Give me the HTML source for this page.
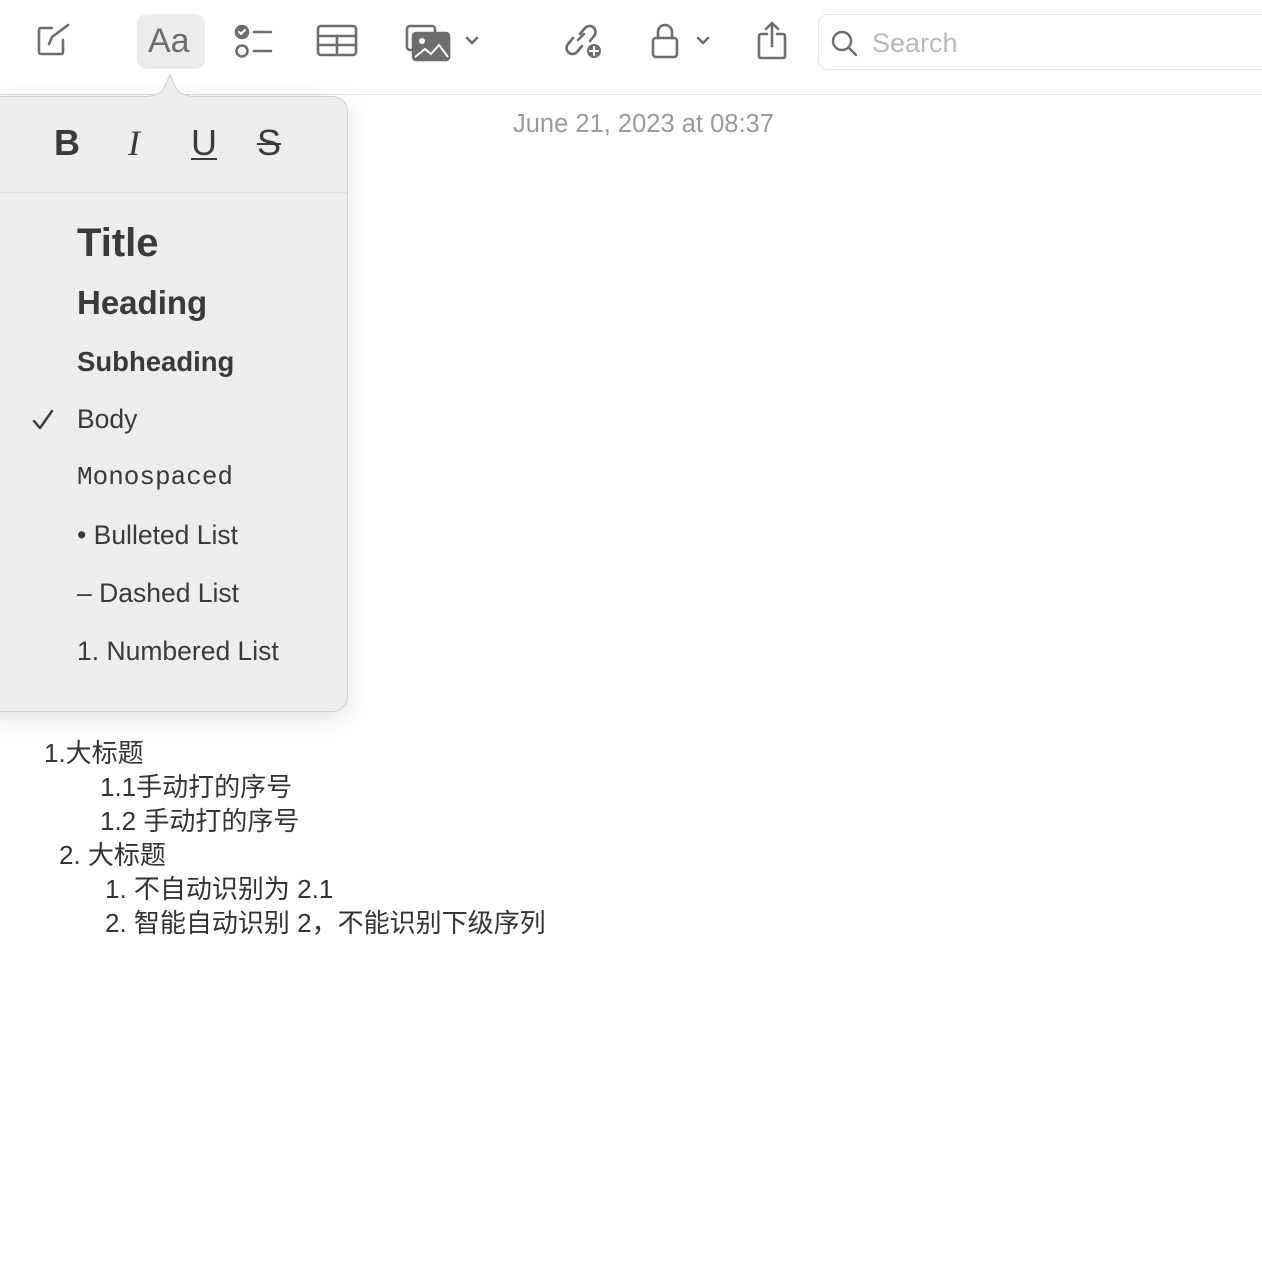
<!DOCTYPE html>
<html><head><meta charset="utf-8"><style>
*{margin:0;padding:0;box-sizing:border-box}
body{width:1262px;height:1282px;background:#fff;position:relative;overflow:hidden;font-family:"Liberation Sans","Noto Sans CJK SC",sans-serif;color:#333}
.abs{position:absolute}
.tb{position:absolute;left:0;top:0;width:1262px;height:95px;border-bottom:1px solid #e2e2e2;background:#fff}
svg{position:absolute}
.pop{position:absolute;left:-20px;top:96px;width:368px;height:616px;background:#ecedef;border:1px solid #cfcfd1;border-radius:16px;box-shadow:0 6px 24px rgba(0,0,0,.12)}
.it{position:absolute;left:77px;color:#3a3a3c;white-space:nowrap}
.n{position:absolute;font-size:26px;color:#333;white-space:nowrap}
</style></head><body>
<div class="tb">
<svg style="left:36px;top:22px" width="38" height="36" viewBox="0 0 38 36" fill="none" stroke="#6d6d6d" stroke-width="2.6" stroke-linecap="round" stroke-linejoin="round"><path d="M16 6H5a2 2 0 0 0-2 2v22a2 2 0 0 0 2 2h20a2 2 0 0 0 2-2V18"/><path d="M13 22l3-7L32 3"/></svg>
<div class="abs" style="left:137px;top:14px;width:68px;height:55px;background:#ececec;border-radius:10px"></div>
<div class="abs" style="left:148px;top:22px;font-size:34px;color:#6d6d6d">Aa</div>
<svg style="left:232px;top:24px" width="42" height="36" viewBox="0 0 42 36" fill="none" stroke="#6d6d6d" stroke-width="2.6" stroke-linecap="round"><circle cx="10" cy="8" r="6" fill="#6d6d6d"/><path d="M7 8l2 2 4-4" stroke="#fff" stroke-width="2"/><circle cx="10" cy="27" r="5.5"/><path d="M22 8h17M22 27h17"/></svg>
<svg style="left:316px;top:24px" width="42" height="34" viewBox="0 0 42 34" fill="none" stroke="#6d6d6d" stroke-width="2.6"><rect x="2" y="2" width="38" height="29" rx="3"/><path d="M2 12h38M2 21h38M21 12v19"/></svg>
<svg style="left:405px;top:24px" width="80" height="38" viewBox="0 0 80 38" fill="none" stroke="#6d6d6d" stroke-width="2.6"><rect x="2" y="2" width="28" height="24" rx="3"/><rect x="8" y="9" width="36" height="27" rx="3" fill="#6d6d6d"/><circle cx="17" cy="17" r="3" fill="#fff" stroke="none"/><path d="M10 33l10-8 6 5 8-9 9 12" stroke="#fff" stroke-width="2"/><path d="M62 14l5 5 5-5" stroke-linecap="round"/></svg>
<svg style="left:563px;top:22px" width="42" height="38" viewBox="0 0 42 38" fill="none" stroke="#6d6d6d" stroke-width="2.6" stroke-linecap="round"><path d="M17 12l5-6a6 6 0 0 1 9 8l-4 5"/><path d="M19 24l-5 6a6 6 0 0 1-9-8l5-6"/><path d="M15 18l6-6"/><circle cx="31" cy="29" r="7" fill="#6d6d6d" stroke="none"/><path d="M31 25v8M27 29h8" stroke="#fff" stroke-width="2"/></svg>
<svg style="left:650px;top:22px" width="66" height="38" viewBox="0 0 66 38" fill="none" stroke="#6d6d6d" stroke-width="2.6" stroke-linecap="round"><path d="M8 16V10a7 7 0 0 1 14 0v6"/><rect x="3" y="16" width="24" height="19" rx="3"/><path d="M48 16l5 5 5-5"/></svg>
<svg style="left:756px;top:20px" width="36" height="40" viewBox="0 0 36 40" fill="none" stroke="#6d6d6d" stroke-width="2.6" stroke-linecap="round" stroke-linejoin="round"><path d="M11 14H5a2 2 0 0 0-2 2v20a2 2 0 0 0 2 2h22a2 2 0 0 0 2-2V16a2 2 0 0 0-2-2h-6"/><path d="M16 26V3M10 9l6-6 6 6"/></svg>
<div class="abs" style="left:818px;top:14px;width:460px;height:56px;border:1px solid #e4e4e4;border-radius:10px;box-shadow:0 1px 2px rgba(0,0,0,.04)"></div>
<svg style="left:830px;top:29px" width="30" height="30" viewBox="0 0 30 30" fill="none" stroke="#6d6d6d" stroke-width="2.4" stroke-linecap="round"><circle cx="12" cy="12" r="9"/><path d="M19 19l7 7"/></svg>
<div class="abs" style="left:872px;top:28px;font-size:27px;color:#b9b9b9">Search</div>
</div>
<div class="abs" style="left:513px;top:110px;font-size:25.5px;color:#9a9a9a">June 21, 2023 at 08:37</div>

<div class="pop"></div>
<svg style="left:138px;top:70px" width="64" height="30" viewBox="0 0 64 30"><path d="M0 27 Q22 27 26 18 L32 5 L38 18 Q42 27 64 27 L64 30 L0 30Z" fill="#ecedef" stroke="#cfcfd1" stroke-width="1"/><rect x="0" y="27" width="64" height="4" fill="#ecedef"/></svg>
<div class="abs" style="left:0;top:192px;width:347px;height:1px;background:#dcdcde"></div>
<div class="abs" style="left:54px;top:122px;font-size:36px;font-weight:bold;color:#3a3a3c">B</div>
<div class="abs" style="left:128px;top:122px;font-size:36px;font-style:italic;color:#3a3a3c;font-family:'Liberation Serif',serif">I</div>
<div class="abs" style="left:191px;top:122px;font-size:36px;color:#3a3a3c;text-decoration:underline;text-decoration-thickness:2px;text-underline-offset:3px">U</div>
<div class="abs" style="left:257px;top:122px;font-size:36px;color:#3a3a3c;text-decoration:line-through;text-decoration-thickness:2px">S</div>
<div class="it" style="top:221px;font-size:40px;font-weight:bold">Title</div>
<div class="it" style="top:284px;font-size:33px;font-weight:bold">Heading</div>
<div class="it" style="top:346px;font-size:27.5px;font-weight:bold">Subheading</div>
<svg style="left:32px;top:409px" width="22" height="22" viewBox="0 0 22 22" fill="none" stroke="#3a3a3c" stroke-width="2.4" stroke-linecap="round" stroke-linejoin="round"><path d="M2 12l6 7L20 2"/></svg>
<div class="it" style="top:404px;font-size:26.5px">Body</div>
<div class="it" style="top:462px;font-size:26px;font-family:'Liberation Mono',monospace">Monospaced</div>
<div class="it" style="top:520px;font-size:26.5px">• Bulleted List</div>
<div class="it" style="top:578px;font-size:26.5px">– Dashed List</div>
<div class="it" style="top:636px;font-size:26.5px">1. Numbered List</div>

<div class="n" style="left:44px;top:733px">1.大标题</div>
<div class="n" style="left:100px;top:767px">1.1手动打的序号</div>
<div class="n" style="left:100px;top:801px">1.2 手动打的序号</div>
<div class="n" style="left:59px;top:835px">2. 大标题</div>
<div class="n" style="left:105px;top:869px">1. 不自动识别为 2.1</div>
<div class="n" style="left:105px;top:903px">2. 智能自动识别 2，不能识别下级序列</div>
</body></html>
